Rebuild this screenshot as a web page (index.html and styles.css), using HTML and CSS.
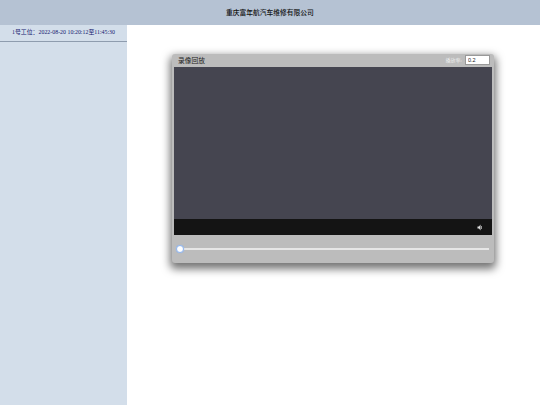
FILE: index.html
```html
<!DOCTYPE html>
<html lang="zh-CN">
<head>
    <meta charset="UTF-8">
    <meta name="viewport" content="width=device-width, initial-scale=1.0">
    <title>重庆富年航汽车维修有限公司</title>
    <link rel="stylesheet" href="styles.css">
</head>
<body>

    <header class="top-bar">重庆富年航汽车维修有限公司</header>

    <div class="content">
        <aside class="sidebar">
            <div class="record-item">1号工位：2022-08-20 10:20:12至11:45:30</div>
        </aside>

        <main class="main">
            <div class="player-box">
                <div class="player-title">
                    <span class="title-text">录像回放</span>
                    <span class="speed-label">播放率:</span>
                    <input class="speed-input" type="text" value="0.2">
                </div>
                <div class="video-area"></div>
                <div class="video-controls">
                    <svg class="volume-icon" width="6" height="7" viewBox="0 0 6 7">
                        <path d="M0.500 2.500h1.500l1.500-2v6l-1.500-2H0.500z" fill="#e0e0e0"/>
                        <path d="M4.500 2v3" stroke="#999" stroke-width="1"/>
                    </svg>
                </div>
                <div class="slider-row">
                    <div class="slider-track"></div>
                    <span class="slider-thumb"></span>
                </div>
            </div>
        </main>
    </div>

</body>
</html>
```

FILE: styles.css
```css
* {
    box-sizing: border-box;
}

html, body {
    margin: 0;
    padding: 0;
    height: 100%;
    overflow: hidden;
    background-color: #fff;
    font-family: "Liberation Serif", "Noto Sans CJK SC", serif;
}

body {
    display: flex;
    flex-direction: column;
}

.top-bar {
    height: 25px;
    line-height: 25px;
    background-color: #b5c2d3;
    color: #111;
    font-size: 6.750px;
    font-weight: 500;
    text-align: center;
    flex-shrink: 0;
}

.content {
    display: flex;
    flex: 1;
}

.sidebar {
    width: 127px;
    background-color: #d3deea;
}

.record-item {
    height: 17px;
    line-height: 15px;
    border-bottom: 1px solid #8e9cae;
    color: #14186e;
    font-size: 5.900px;
    text-align: center;
    white-space: nowrap;
}

.main {
    flex: 1;
    padding: 29px 0 0 45px;
}

.player-box {
    width: 322px;
    height: 209px;
    padding: 0 2px;
    background-color: #bcbcbc;
    border-radius: 3px;
    box-shadow: 0 4px 8px 2px rgba(0, 0, 0, 0.55);
    display: flex;
    flex-direction: column;
}

.player-title {
    height: 13px;
    display: flex;
    align-items: center;
    padding: 0 2px 2px 4px;
}

.title-text {
    flex: 1;
    color: #222;
    font-size: 6.750px;
}

.speed-label {
    color: #eee;
    font-size: 5px;
    margin-right: 3px;
}

.speed-input {
    width: 25px;
    height: 10px;
    padding: 0 2px;
    border: 1px solid #999;
    background: #fff;
    color: #222;
    font-family: "Liberation Sans", sans-serif;
    font-size: 5.500px;
}

.video-area {
    height: 152px;
    background-color: #454550;
}

.video-controls {
    height: 16px;
    background-color: #141414;
    display: flex;
    align-items: center;
    justify-content: flex-end;
    padding-right: 9px;
}

.slider-row {
    flex: 1;
    position: relative;
    display: flex;
    align-items: center;
    padding: 0 3px 0 4px;
}

.slider-track {
    flex: 1;
    height: 2px;
    background-color: #e6e6e6;
}

.slider-thumb {
    position: absolute;
    left: 2px;
    top: 10px;
    width: 8px;
    height: 8px;
    border-radius: 50%;
    background: #fff;
    border: 1px solid #8fb4ec;
    box-shadow: 0 0 1px #8fb4ec;
}
```
